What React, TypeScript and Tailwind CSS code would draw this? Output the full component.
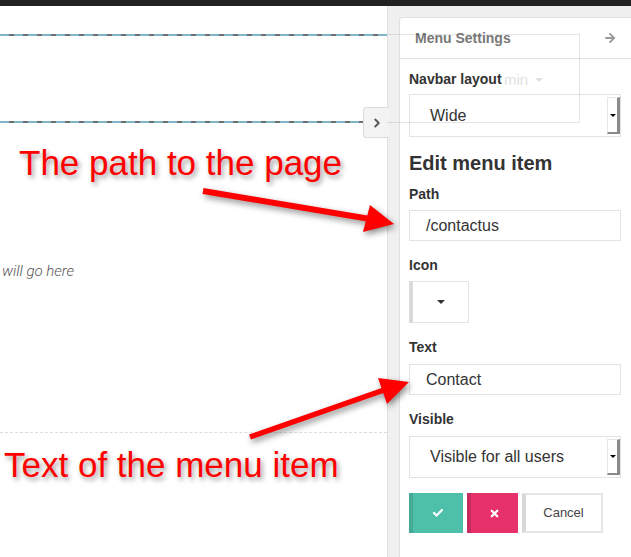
import React from 'react';
import { ArrowRight, ChevronRight, Check, X } from 'lucide-react';

const dashed =
  'h-[2px] bg-[repeating-linear-gradient(90deg,#7fb6c9_0px,#7fb6c9_9px,#6a6f70_9px,#6a6f70_14px)]';

function Caret({ color = '#333' }: { color?: string }) {
  return (
    <span
      className="inline-block h-0 w-0 border-x-[4px] border-t-[4px] border-x-transparent"
      style={{ borderTopColor: color }}
    />
  );
}

function Label({ children, className = '' }: { children: React.ReactNode; className?: string }) {
  return <div className={`h-5 text-[14px] font-bold leading-5 text-[#333] ${className}`}>{children}</div>;
}

function SelectBox({ value, className = '' }: { value: string; className?: string }) {
  return (
    <div className={`flex h-[42px] w-[212px] items-stretch border border-[#e3e3e3] bg-white ${className}`}>
      <div className="flex flex-1 items-center pl-5 text-[16px] text-[#333]">{value}</div>
      <div className="my-[2px] flex w-[13px] items-center justify-center border-l border-t border-l-[#e6e6e6] border-t-[#e6e6e6] border-r-[3px] border-b-[2px] border-r-[#8a8a8a] border-b-[#8a8a8a] bg-white">
        <span className="inline-block h-0 w-0 border-x-[3px] border-t-[3px] border-x-transparent border-t-black" />
      </div>
    </div>
  );
}

function TextInput({ value, className = '' }: { value: string; className?: string }) {
  return (
    <div className={`flex h-[31px] w-[212px] items-center border border-[#e3e3e3] bg-white pl-4 text-[16px] text-[#333] ${className}`}>
      {value}
    </div>
  );
}

function MenuPanel() {
  return (
    <div className="flex flex-1 flex-col rounded-tl-[3px] border-l border-t border-[#e0e0e0] bg-white">
      <div className="flex h-[41px] items-center justify-between border-b border-[#e0e0e0] pl-[15px] pr-[14px]">
        <span className="text-[14px] font-bold text-[#777]">Menu Settings</span>
        <ArrowRight size={14} strokeWidth={3.2} color="#9a9a9a" />
      </div>

      <div className="flex flex-col pl-[9px]">
        <Label className="mt-[10px]">Navbar layout</Label>
        <SelectBox value="Wide" className="mt-[5px] h-[43px]" />

        <h2 className="mt-[14px] h-6 text-[20px] font-bold leading-6 text-[#333]">Edit menu item</h2>

        <Label className="mt-[9px]">Path</Label>
        <TextInput value="/contactus" className="mt-[6px]" />

        <Label className="mt-[14px]">Icon</Label>
        <div className="mt-[6px] flex h-[42px] w-[60px] items-center justify-center border border-l-[4px] border-[#e3e3e3] border-l-[#dadada] bg-white">
          <Caret />
        </div>

        <Label className="mt-[14px]">Text</Label>
        <TextInput value="Contact" className="mt-[7px]" />

        <Label className="mt-[14px]">Visible</Label>
        <SelectBox value="Visible for all users" className="mt-[7px]" />

        <div className="mt-[15px] flex h-10 gap-[4px]">
          <button className="flex w-[54px] items-center justify-center border-l-[4px] border-[#45aa95] bg-[#4ebfa8]">
            <Check size={12} strokeWidth={4.5} color="#fff" />
          </button>
          <button className="flex w-[51px] items-center justify-center border-l-[4px] border-[#c92a5d] bg-[#e6316b]">
            <X size={11} strokeWidth={5} color="#fff" />
          </button>
          <button className="flex w-[81px] items-center justify-center border-2 border-l-[4px] border-[#e6e6e6] border-l-[#d8d8d8] bg-white text-[13px] text-[#444]">
            Cancel
          </button>
        </div>
      </div>
    </div>
  );
}

export default function App() {
  return (
    <div className="relative flex h-[557px] w-[631px] flex-col overflow-hidden bg-white font-['Liberation_Sans',Arial,sans-serif]">
      <div className="h-[6px] shrink-0 bg-[#222]" />

      <div className="flex min-h-0 flex-1">
        <main className="flex flex-1 flex-col">
          <div className={`mt-[28px] ${dashed}`} />
          <div className="h-[85px]" />
          <div className={dashed} />
          <p className="mt-[138px] h-5 pl-[2px] font-['Roboto',sans-serif] text-[15px] font-light italic leading-5 text-[#555]">
            will go here
          </p>
          <div className="mt-[151px] border-t border-dashed border-[#dcdcdc]" />
        </main>

        <aside className="relative flex w-[244px] flex-col border-l border-[#e0e0e0] bg-[#f0f0f0] pl-[11px] pt-[11px]">
          <div className="absolute left-[-25px] top-[101px] flex h-[31px] w-[26px] items-center justify-center rounded-l-[3px] border-y border-l border-[#dcdcdc] bg-[#f3f3f3]">
            <ChevronRight size={14} strokeWidth={3.2} color="#555" />
          </div>
          <MenuPanel />
        </aside>
      </div>

      {/* ghost of the navbar dropdown showing through */}
      <div className="pointer-events-none absolute left-[387px] top-[34px] h-[89px] w-[193px] border-y border-r border-black/10" />
      <div className="pointer-events-none absolute left-[504px] top-[69px] flex items-center gap-[7px] text-[15px] text-[#e2e2e2]">
        <span>min</span>
        <Caret color="#e2e2e2" />
      </div>

      {/* annotations */}
      <svg className="pointer-events-none absolute inset-0 drop-shadow-[2px_3px_3px_rgba(0,0,0,0.45)]" width="631" height="557">
        <line x1="203" y1="191" x2="370" y2="219" stroke="#ff0000" strokeWidth="6" />
        <polygon points="394,224 370,205 363,232" fill="#ff0000" />
        <line x1="250" y1="437" x2="384" y2="390" stroke="#ff0000" strokeWidth="5.5" />
        <polygon points="409,382 378,378 387,404" fill="#ff0000" />
      </svg>
      <div className="pointer-events-none absolute left-[19px] top-[145px] text-[35px] leading-[35px] text-[#ff0000] [text-shadow:2px_3px_5px_rgba(0,0,0,0.4)]">
        The path to the page
      </div>
      <div className="pointer-events-none absolute left-[4px] top-[447px] text-[35px] leading-[35px] text-[#ff0000] [text-shadow:2px_3px_5px_rgba(0,0,0,0.4)]">
        Text of the menu item
      </div>
    </div>
  );
}
